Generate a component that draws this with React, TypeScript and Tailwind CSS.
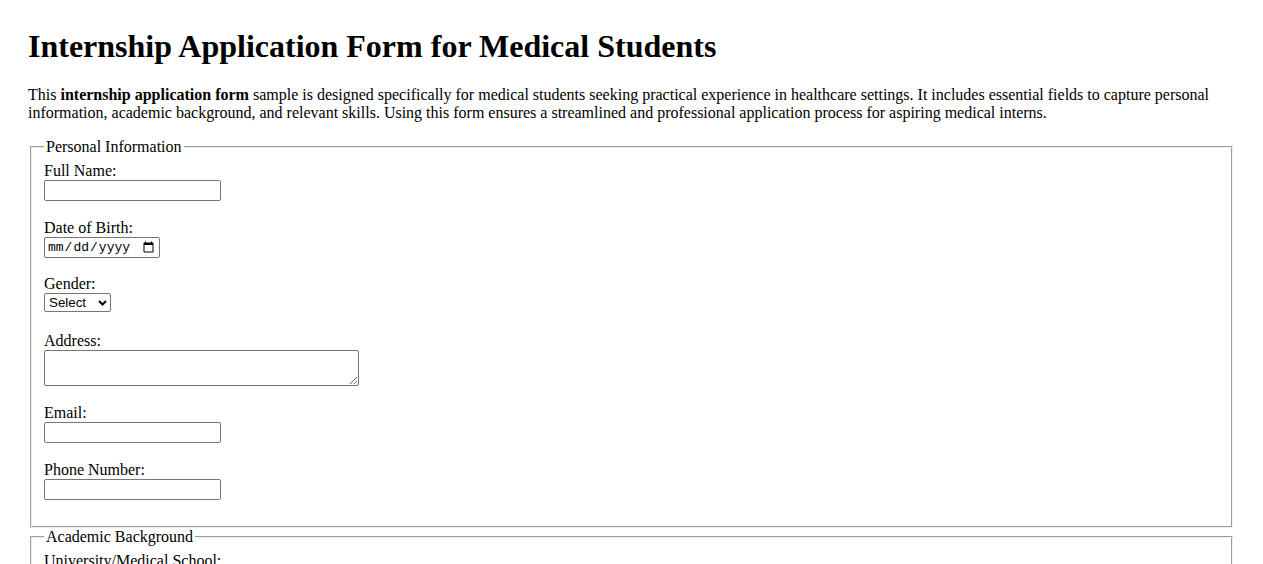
import React from "react";

const box = "block rounded-[2px] border border-[#767676] bg-white text-[13.333px] leading-[normal]";
const sans = "font-['Liberation_Sans',Arial,sans-serif]";

const fieldsetCls =
  "mx-[2px] border-2 border-[#f0f0f0] px-3 pt-[5.6px] pb-[10px] [border-style:groove]";

function TextField({ label, type = "text", last = false }: { label: string; type?: string; last?: boolean }) {
  return (
    <div className={last ? "mb-[16.4px]" : "mb-[17.6px]"}>
      <label className="block">{label}</label>
      <input type={type} className={`${box} ${sans} h-[21px] w-[177px] px-[2px] py-[1px]`} />
    </div>
  );
}

export default function App() {
  return (
    <div className="min-h-screen bg-white px-[28px] pt-[28px] font-['Liberation_Serif','Times_New_Roman',serif] text-[16px] leading-[normal] text-black">
      <h1 className="mb-[21.44px] text-[32px] font-bold">
        Internship Application Form for Medical Students
      </h1>
      <p className="mb-4">
        This <strong className="font-bold">internship application form</strong> sample is designed
        specifically for medical students seeking practical experience in healthcare settings. It
        includes essential fields to capture personal information, academic background, and relevant
        skills. Using this form ensures a streamlined and professional application process for
        aspiring medical interns.
      </p>

      <form>
        <fieldset className={fieldsetCls}>
          <legend className="px-[2px]">Personal Information</legend>
          <TextField label="Full Name:" />

          <div className="mb-[17.6px]">
            <label className="block">Date of Birth:</label>
            <input
              type="date"
              className="block h-[21px] w-[116px] rounded-[2px] border border-[#767676] bg-white px-[2px] py-[1px] font-['Liberation_Mono',monospace] text-[13px] leading-[normal]"
            />
          </div>

          <div className="mb-[19.6px]">
            <label className="block">Gender:</label>
            <div className="relative w-[67px]">
              <select className={`${box} ${sans} h-[19px] w-[67px] appearance-none pl-[4px]`}>
                <option>Select</option>
                <option>Male</option>
                <option>Female</option>
                <option>Other</option>
              </select>
              <svg
                className="pointer-events-none absolute top-[7px] right-[4px] h-[6px] w-[9px]"
                viewBox="0 0 9 6"
                fill="none"
              >
                <path d="M1 1 L4.5 4.5 L8 1" stroke="#000" strokeWidth="2" />
              </svg>
            </div>
          </div>

          <div className="mb-[18.6px]">
            <label className="block">Address:</label>
            <textarea
              className="block h-[36px] w-[315px] rounded-[2px] border border-[#767676] bg-white p-[2px] font-['Liberation_Mono',monospace] text-[13.333px]"
            />
          </div>

          <TextField label="Email:" type="email" />
          <TextField label="Phone Number:" type="tel" last />
        </fieldset>

        <fieldset className={fieldsetCls}>
          <legend className="px-[2px]">Academic Background</legend>
          <TextField label="University/Medical School:" />
          <TextField label="Year of Study:" />
          <TextField label="Expected Graduation Date:" type="date" last />
        </fieldset>
      </form>
    </div>
  );
}
